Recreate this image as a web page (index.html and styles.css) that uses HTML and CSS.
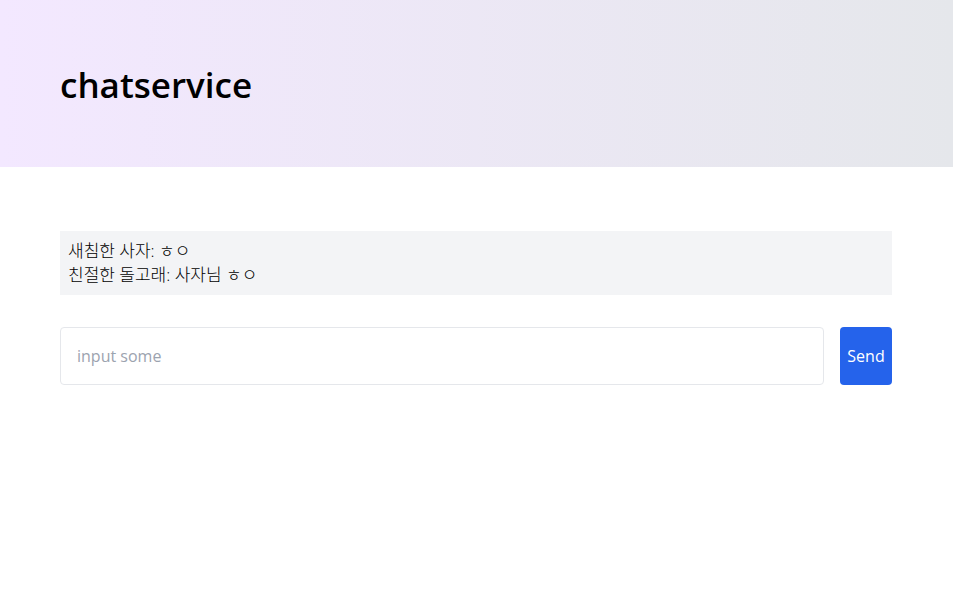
FILE: index.html
```html
<!DOCTYPE html>
<html lang="ko">
<head>
  <meta charset="utf-8">
  <meta name="viewport" content="width=device-width, initial-scale=1">
  <title>chatservice</title>
  <link rel="stylesheet" href="styles.css">
</head>
<body>
  <header class="hero">
    <h1 class="hero-title">chatservice</h1>
  </header>
  <main class="chat">
    <ul class="messages">
      <li>새침한 사자: ㅎㅇ</li>
      <li>친절한 돌고래: 사자님 ㅎㅇ</li>
    </ul>
    <form class="composer">
      <input class="composer-input" type="text" placeholder="input some" aria-label="Message">
      <button class="composer-send" type="button">Send</button>
    </form>
  </main>
</body>
</html>
```

FILE: styles.css
```css
* {
  box-sizing: border-box;
}

body {
  margin: 0;
  background: #ffffff;
  color: #000000;
  font-family: "Open Sans", "Noto Sans CJK KR", sans-serif;
  font-size: 16px;
  line-height: 24px;
}

.hero {
  padding: 64px 61px 61px 60px;
  background: linear-gradient(to right, #f3e8ff, #e5e7eb);
}

.hero-title {
  margin: 0;
  font-size: 35px;
  font-weight: 600;
  line-height: 42px;
}

.chat {
  padding: 64px 61px 64px 60px;
}

.messages {
  margin: 0 0 32px;
  padding: 8px;
  list-style: none;
  background: #f3f4f6;
  font-size: 17px;
  font-weight: 300;
}

.composer {
  display: flex;
  gap: 16px;
}

.composer-input {
  flex: 1;
  min-width: 0;
  padding: 16px;
  border: 1px solid #e5e7eb;
  border-radius: 4px;
  background: #ffffff;
  color: inherit;
  font: inherit;
}

.composer-input::placeholder {
  color: #9ca3af;
}

.composer-send {
  width: 52px;
  padding: 8px 7px;
  border: 0;
  border-radius: 4px;
  background: #2563eb;
  color: #ffffff;
  font: inherit;
}
```
